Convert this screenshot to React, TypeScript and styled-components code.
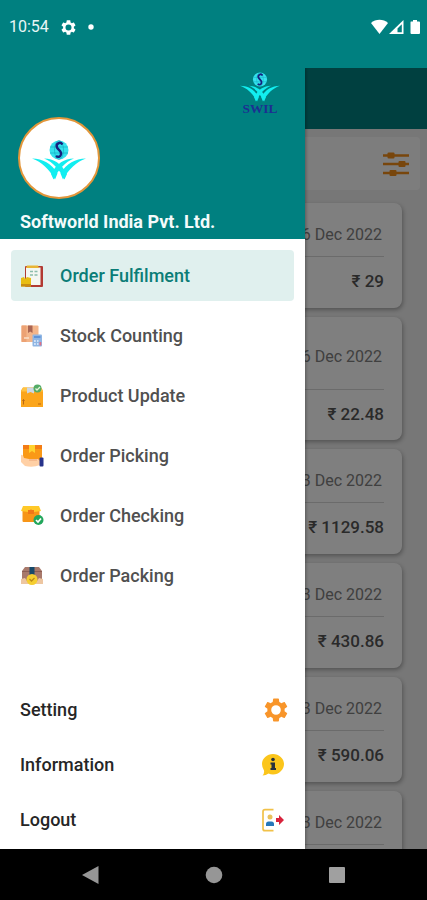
import React from "react";
import styled, { createGlobalStyle } from "styled-components";

const GlobalStyle = createGlobalStyle`
  * { box-sizing: border-box; }
  body { margin: 0; background: #000; font-family: Roboto, "Noto Sans", sans-serif; }
  button { font: inherit; border: 0; background: none; padding: 0; cursor: pointer; }
  svg { display: block; flex: none; }
`;

const Screen = styled.div`
  display: flex;
  flex-direction: column;
  height: 100vh;
  overflow: hidden;
`;

const StatusBar = styled.header`
  display: flex;
  align-items: flex-start;
  justify-content: space-between;
  height: 68px;
  padding: 17px 6px 0 9px;
  background: #008080;
  color: #fff;
`;

const StatusGroup = styled.div<{ $gap: number }>`
  display: flex;
  align-items: center;
  gap: ${(p) => p.$gap}px;
  height: 20px;
`;

const Clock = styled.time`
  font-size: 16px;
  line-height: 20px;
  color: #e8f6f6;
`;

const Stage = styled.div`
  position: relative;
  flex: 1;
  min-height: 0;
  overflow: hidden;
`;

const Page = styled.main`
  height: 100%;
  overflow: hidden;
  background: #eeeeee;
`;

const AppBar = styled.div`
  height: 61px;
  background: #008080;
`;

const SearchPanel = styled.div`
  display: flex;
  align-items: center;
  justify-content: flex-end;
  height: 53px;
  margin: 8px 7px 13px;
  padding-right: 10px;
  border-radius: 4px;
  background: #fbfbfb;
`;

const CardList = styled.div`
  display: flex;
  flex-direction: column;
  gap: 9px;
  padding: 0 25px 0 12px;
`;

const Card = styled.article<{ $tall?: boolean }>`
  flex: none;
  border-radius: 8px;
  background: #ffffff;
  box-shadow: 1px 2px 4px rgba(0, 0, 0, 0.3);
  padding: ${(p) => (p.$tall ? 30 : 22)}px 18px 0;
  height: ${(p) => (p.$tall ? 123 : 105)}px;
`;

const CardDate = styled.div<{ $tall?: boolean }>`
  padding: 0 2px ${(p) => (p.$tall ? 22 : 11)}px 0;
  border-bottom: 1px solid #d6d6d6;
  text-align: right;
  font-size: 16px;
  line-height: 20px;
  color: #808080;
`;

const Price = styled.div`
  padding-top: 14px;
  text-align: right;
  font-size: 17px;
  font-weight: 500;
  line-height: 20px;
  color: #555;
`;

const Scrim = styled.div`
  position: absolute;
  inset: 0;
  background: rgba(0, 0, 0, 0.5);
`;

const Drawer = styled.aside`
  position: absolute;
  top: 0;
  bottom: 0;
  left: 0;
  display: flex;
  flex-direction: column;
  width: min(305px, 86vw);
  background: #fff;
  box-shadow: 1px 0 3px rgba(0, 0, 0, 0.3);
`;

const DrawerHeader = styled.div`
  display: flex;
  flex-direction: column;
  height: 171px;
  padding: 4px 25px 0 18px;
  background: #008080;
`;

const Brand = styled.div`
  align-self: flex-end;
  height: 45px;
`;

const Avatar = styled.div`
  display: flex;
  align-items: center;
  justify-content: center;
  width: 82px;
  height: 82px;
  padding-top: 4px;
  border: 2px solid #e2963a;
  border-radius: 50%;
  background: #fff;
`;

const Company = styled.h1`
  margin: 13px 0 0 2px;
  font-size: 18px;
  font-weight: 700;
  line-height: 20px;
  color: #f4fbfb;
  white-space: nowrap;
`;

const Menu = styled.nav`
  display: flex;
  flex-direction: column;
  gap: 9px;
  padding: 11px 11px 0;
`;

const MenuItem = styled.button<{ $active?: boolean }>`
  display: flex;
  align-items: center;
  gap: 16px;
  height: 51px;
  padding: 0 9px;
  border-radius: 4px;
  text-align: left;
  font-size: 18px;
  font-weight: 500;
  color: ${(p) => (p.$active ? "#0b7d77" : "#505050")};
  && { background: ${(p) => (p.$active ? "#e0f0ee" : "transparent")}; }
`;

const FooterMenu = styled.div`
  display: flex;
  flex-direction: column;
  margin-top: auto;
  padding: 0 17px 2px 20px;
`;

const FooterItem = styled.button`
  display: flex;
  align-items: center;
  justify-content: space-between;
  height: 55px;
  font-size: 18px;
  font-weight: 500;
  color: #262626;
`;

const SystemNav = styled.footer`
  display: flex;
  align-items: center;
  justify-content: space-between;
  height: 51px;
  padding: 0 81px;
  background: #000;
`;

const Feathers = () => (
  <>
    <path d="M0 18.500C11 19 19 23 25.500 33.500L23 39.500C17 29 10 22 0 18.500Z" />
    <path d="M12 18.500C22 19 29 23 35 34L32.500 39.500C27 29 21 22 12 18.500Z" />
  </>
);

const Emblem = ({ word }: { word?: boolean }) => (
  <svg
    width={word ? 40 : 54}
    height={word ? 44 : 40}
    viewBox={word ? "0 0 54 59" : "0 0 54 40"}
    role="img"
    aria-label="SWIL logo"
  >
    <circle cx="27" cy="10" r="9.500" fill="#35e2ee" />
    <g fill="none" stroke="#0fa7bd" strokeWidth="0.600">
      <ellipse cx="27" cy="10" rx="4.500" ry="9.500" />
      <path d="M18 7h18M18 13h18" />
    </g>
    <path
      d="M30.500 4.500C28 1 23.500 4 25 7.500C26 10 30 11 29 14.500C28.300 17 26 17.500 24 16"
      fill="none"
      stroke="#17207f"
      strokeWidth="2.400"
    />
    <g fill="#12eef0">
      <Feathers />
      <g transform="translate(54 0) scale(-1 1)">
        <Feathers />
      </g>
    </g>
    {word && (
      <text
        x="27"
        y="55"
        textAnchor="middle"
        fontFamily="Liberation Serif, serif"
        fontWeight="700"
        fontSize="18"
        fill="#1c2f92"
      >
        SWIL
      </text>
    )}
  </svg>
);

const GEAR =
  "M19.140 12.940c.04-.3.06-.61.06-.94 0-.32-.02-.64-.07-.94l2.030-1.580c.18-.14.23-.41.12-.61l-1.920-3.320c-.12-.22-.37-.29-.59-.22l-2.390.96c-.5-.38-1.030-.7-1.620-.94L14.400 2.810c-.04-.24-.24-.41-.48-.41h-3.840c-.24 0-.43.17-.47.41L9.250 5.350c-.59.24-1.130.57-1.620.94l-2.390-.96c-.22-.08-.47 0-.59.22L2.740 8.870c-.12.21-.08.47.12.61l2.030 1.580c-.05.3-.09.63-.09.94s.02.64.07.94l-2.030 1.580c-.18.14-.23.41-.12.61l1.920 3.320c.12.22.37.29.59.22l2.390-.96c.5.38 1.030.7 1.620.94l.36 2.540c.05.24.24.41.48.41h3.840c.24 0 .44-.17.47-.41l.36-2.540c.59-.24 1.130-.56 1.620-.94l2.390.96c.22.08.47 0 .59-.22l1.920-3.320c.12-.22.07-.47-.12-.61l-2.010-1.580zM12 16a4 4 0 1 1 0-8 4 4 0 0 1 0 8z";

const GearIcon = ({ size, color }: { size: number; color: string }) => (
  <svg width={size} height={size} viewBox="2 2 20 20" fill={color} aria-hidden="true">
    <path d={GEAR} fillRule="evenodd" />
  </svg>
);

const StatusIcons = () => (
  <svg width="50" height="16" viewBox="0 0 50 16" fill="#fff" aria-hidden="true">
    <path d="M0 4C4.500-.3 12.500-.3 17 4L8.500 15Z" />
    <path d="M18 15L32.500 1V15Z" />
    <path d="M26.500 9.500L30.800 5.200V13.200H26.500Z" fill="#008080" />
    <path d="M40 2.500h2V1h4v1.500h2q1 0 1 1V14q0 1-1 1H40.500q-1 0-1-1V3.500q0-1 .5-1Z" />
  </svg>
);

const FilterIcon = () => (
  <svg width="28" height="26" viewBox="0 0 28 26" fill="#f08c18" aria-hidden="true">
    <path d="M1 3.300h26v2.400H1zM1 11.800h26v2.400H1zM1 20.800h26v2.400H1z" />
    <rect x="5.500" y="1.500" width="7" height="6" rx="1" />
    <rect x="16.500" y="10" width="7" height="6" rx="1" />
    <rect x="7.500" y="19" width="7" height="6" rx="1" />
  </svg>
);

const Glyph = ({ children }: { children: React.ReactNode }) => (
  <svg width="24" height="24" viewBox="0 0 24 24" aria-hidden="true">
    {children}
  </svg>
);

const FulfilmentIcon = () => (
  <Glyph>
    <rect x="5" y="2" width="18" height="21" rx="1" fill="#b23a32" />
    <rect x="6" y="3.500" width="14.500" height="17.500" fill="#f4f7f1" />
    <path d="M7 1.500h11l1 2.500H6z" fill="#e9b535" />
    <path d="M10 7.500h3M14.500 7.500h3M10 11h3M14.500 11h3" stroke="#8bbdab" strokeWidth="1.300" />
    <path d="M1 14l3-1 1 2 2-2 4 1v8.500H1z" fill="#e8bd12" />
    <path d="M1 20h10v2.500H1z" fill="#c78d12" />
  </Glyph>
);

const StockIcon = () => (
  <Glyph>
    <rect x="1.500" y="1.500" width="17" height="16.500" rx="1" fill="#f3b58a" />
    <path d="M1.500 1.500h5V18h-5z" fill="#eca274" />
    <path d="M8 1.500h4.500V9L10.200 7.500 8 9z" fill="#aa6552" />
    <path d="M4 14h5" stroke="#fae0ca" strokeWidth="1.500" />
    <rect x="12.500" y="10.500" width="9.500" height="12" rx="1" fill="#8fb6e4" />
    <path d="M14 13h6.500" stroke="#5f93d8" strokeWidth="2" />
    <path d="M14 17h1.800M17 17h1.500M14 20h1.800M17 20h1.500" stroke="#e8f0fc" strokeWidth="1.500" />
    <path d="M19.500 18h1.800v3.500h-1.800z" fill="#df7186" />
  </Glyph>
);

const UpdateIcon = () => (
  <Glyph>
    <path d="M3 3.500h18l2 3V23H1V6.500z" fill="#fba51b" />
    <path d="M3 3.500h18l2 4H1z" fill="#ffc344" />
    <path d="M7 3.500h7v6L10.500 8 7 9.500z" fill="#cdd7e4" />
    <path d="M3.500 15.500v5M2.500 17l1-1.500 1 1.500M18 20h3" fill="none" stroke="#b96710" />
    <circle cx="17.500" cy="4.500" r="4" fill="#54ac67" />
    <path d="M15.500 4.500l1.500 1.500 3-3" fill="none" stroke="#e4f5da" strokeWidth="1.300" />
  </Glyph>
);

const PickingIcon = () => (
  <Glyph>
    <rect x="3" y="1" width="19" height="17" rx="1" fill="#fa9916" />
    <path d="M3 1h19v4H3z" fill="#f47c15" />
    <path d="M9 1h6v8l-3-2-3 2z" fill="#ffd22e" />
    <path d="M1 11q2-1 3 3l5 1h9l2 2v4q-7 3-15 1l-4-4z" fill="#ffd0a5" />
    <path d="M9 16h8" stroke="#eea479" />
    <rect x="19.500" y="13.500" width="4" height="9" rx="1" fill="#27338b" />
  </Glyph>
);

const CheckingIcon = () => (
  <Glyph>
    <rect x="2.500" y="5" width="17" height="13" rx="1" fill="#f79517" />
    <path d="M3 2h16l2 5-7 1-3-3-3 3-7-1z" fill="#ffc928" />
    <path d="M8 6h6v4H8z" fill="#ef7618" />
    <circle cx="18.500" cy="16" r="5" fill="#22a75c" />
    <path d="M16 16l2 2 3-3.500" fill="none" stroke="#fff" strokeWidth="1.700" />
  </Glyph>
);

const PackingIcon = () => (
  <Glyph>
    <path d="M5 3h14l3 4v11H2V7z" fill="#a8796b" />
    <path d="M2 7h20v1H2z" fill="#8b5d54" />
    <path d="M9.500 3h5v8h-5z" fill="#174969" />
    <path d="M1 15l4-1 4 6H1zM23 15l-4-1-4 6h8z" fill="#edc6a1" />
    <circle cx="12" cy="15.500" r="5.500" fill="#f5ce2f" />
    <path d="M9.500 15l2 2 3-3" fill="none" stroke="#bb8b16" strokeWidth="1.300" />
  </Glyph>
);

const InfoIcon = () => (
  <svg width="28" height="24" viewBox="0 0 28 24" aria-hidden="true">
    <path
      d="M13 1C19 1 24 5.500 24 11S19 21.500 13 21.500Q10.500 21.500 8.500 20.500Q6 22.500 2.500 22.500Q4.500 20.500 4 17.500Q2 14.500 2 11C2 5.500 7 1 13 1Z"
      fill="#fbc51b"
    />
    <circle cx="13" cy="6.500" r="1.800" fill="#27303d" />
    <path d="M10.500 9.500h4.500v5.500h1v2h-5.500v-2h1v-3.500h-1z" fill="#27303d" />
  </svg>
);

const LogoutIcon = () => (
  <svg width="28" height="24" viewBox="0 0 28 24" aria-hidden="true">
    <path
      d="M13.500 1.700H5q-2 0-2 2v17q0 2 2 2h8.500"
      fill="none"
      stroke="#f1c149"
      strokeWidth="1.700"
    />
    <circle cx="10" cy="9" r="2.500" fill="#e9c15b" />
    <path d="M6 18v-2q0-2.500 2.500-2.500h3Q14 13.500 14 16v2z" fill="#2677ba" />
    <path d="M16 10h3V7l5 5-5 5v-3h-3z" fill="#d8233c" />
  </svg>
);

const menu = [
  { label: "Order Fulfilment", Icon: FulfilmentIcon },
  { label: "Stock Counting", Icon: StockIcon },
  { label: "Product Update", Icon: UpdateIcon },
  { label: "Order Picking", Icon: PickingIcon },
  { label: "Order Checking", Icon: CheckingIcon },
  { label: "Order Packing", Icon: PackingIcon },
];

const orders = [
  { date: "26 Dec 2022", price: "₹ 29" },
  { date: "26 Dec 2022", price: "₹ 22.48", tall: true },
  { date: "23 Dec 2022", price: "₹ 1129.58" },
  { date: "23 Dec 2022", price: "₹ 430.86" },
  { date: "23 Dec 2022", price: "₹ 590.06" },
  { date: "23 Dec 2022", price: "" },
];

export default function App() {
  return (
    <>
      <GlobalStyle />
      <Screen>
        <StatusBar>
          <StatusGroup $gap={12}>
            <Clock>10:54</Clock>
            <GearIcon size={15} color="#fff" />
            <svg width="6" height="6" viewBox="0 0 6 6" aria-hidden="true">
              <circle cx="3" cy="3" r="2.700" fill="#fff" />
            </svg>
          </StatusGroup>
          <StatusGroup $gap={0}>
            <StatusIcons />
          </StatusGroup>
        </StatusBar>
        <Stage>
          <Page>
            <AppBar />
            <SearchPanel>
              <button aria-label="Filter orders">
                <FilterIcon />
              </button>
            </SearchPanel>
            <CardList>
              {orders.map((o, i) => (
                <Card key={i} $tall={o.tall}>
                  <CardDate $tall={o.tall}>{o.date}</CardDate>
                  <Price>{o.price}</Price>
                </Card>
              ))}
            </CardList>
          </Page>
          <Scrim />
          <Drawer>
            <DrawerHeader>
              <Brand>
                <Emblem word />
              </Brand>
              <Avatar>
                <Emblem />
              </Avatar>
              <Company>Softworld India Pvt. Ltd.</Company>
            </DrawerHeader>
            <Menu>
              {menu.map(({ label, Icon }, i) => (
                <MenuItem key={label} $active={i === 0}>
                  <Icon />
                  {label}
                </MenuItem>
              ))}
            </Menu>
            <FooterMenu>
              <FooterItem>
                Setting
                <GearIcon size={24} color="#f8952a" />
              </FooterItem>
              <FooterItem>
                Information
                <InfoIcon />
              </FooterItem>
              <FooterItem>
                Logout
                <LogoutIcon />
              </FooterItem>
            </FooterMenu>
          </Drawer>
        </Stage>
        <SystemNav>
          <button aria-label="Back">
            <svg width="18" height="20" viewBox="0 0 18 20">
              <path d="M1 10L17.500 1V19Z" fill="#969696" />
            </svg>
          </button>
          <button aria-label="Home">
            <svg width="18" height="18" viewBox="0 0 18 18">
              <circle cx="9" cy="9" r="8.300" fill="#969696" />
            </svg>
          </button>
          <button aria-label="Recent apps">
            <svg width="18" height="18" viewBox="0 0 18 18">
              <rect x="1" y="1" width="16" height="16" rx="1" fill="#a0a0a0" />
            </svg>
          </button>
        </SystemNav>
      </Screen>
    </>
  );
}
